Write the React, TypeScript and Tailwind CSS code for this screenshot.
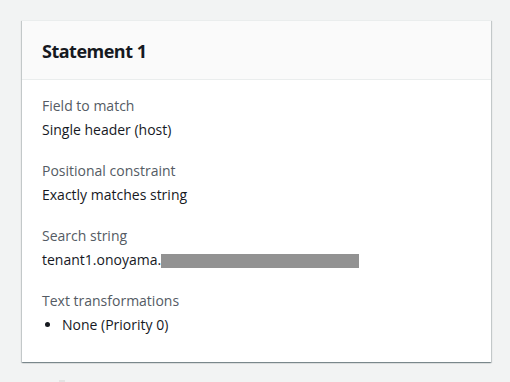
export default function App() {
  const font = { fontFamily: '"Open Sans", "Noto Sans", sans-serif' };
  return (
    <div className="w-[510px] h-[382px] bg-[#f2f3f3] pt-[20px] pl-[22px] overflow-hidden" style={font}>
      <div className="w-[469px] bg-white shadow-[0_1px_1px_0_rgba(0,28,36,0.3),1px_1px_1px_0_rgba(0,28,36,0.15),-1px_1px_1px_0_rgba(0,28,36,0.15)] border-t border-[#eaeded]">
        <div className="h-[59px] bg-[#fafafa] border-b border-[#eaeded] flex items-center px-[20px] pt-[1px]">
          <h2 className="text-[18px] font-bold text-[#16191f] leading-[22px] tracking-[-0.5px]">Statement 1</h2>
        </div>
        <div className="px-[20px] pt-[16px] pb-[27px] flex flex-col gap-[21px] text-[14px] leading-[20px]">
          <div className="flex flex-col gap-[4px]">
            <div className="text-[#545b64]">Field to match</div>
            <div className="text-[#16191f]">Single header (host)</div>
          </div>
          <div className="flex flex-col gap-[4px]">
            <div className="text-[#545b64]">Positional constraint</div>
            <div className="text-[#16191f]">Exactly matches string</div>
          </div>
          <div className="flex flex-col gap-[4px]">
            <div className="text-[#545b64]">Search string</div>
            <div className="text-[#16191f] flex items-center">
              <span>tenant1.onoyama.</span>
              <span className="inline-block w-[198px] h-[14px] bg-[#929292] mt-[2px]" />
            </div>
          </div>
          <div className="flex flex-col gap-[4px]">
            <div className="text-[#545b64]">Text transformations</div>
            <ul className="list-disc pl-[20px] text-[#16191f]">
              <li>None (Priority 0)</li>
            </ul>
          </div>
        </div>
      </div>
      <div className="ml-[37px] mt-[18px] w-[6px] h-[4px] bg-[#e3e4e4]" />
    </div>
  );
}
